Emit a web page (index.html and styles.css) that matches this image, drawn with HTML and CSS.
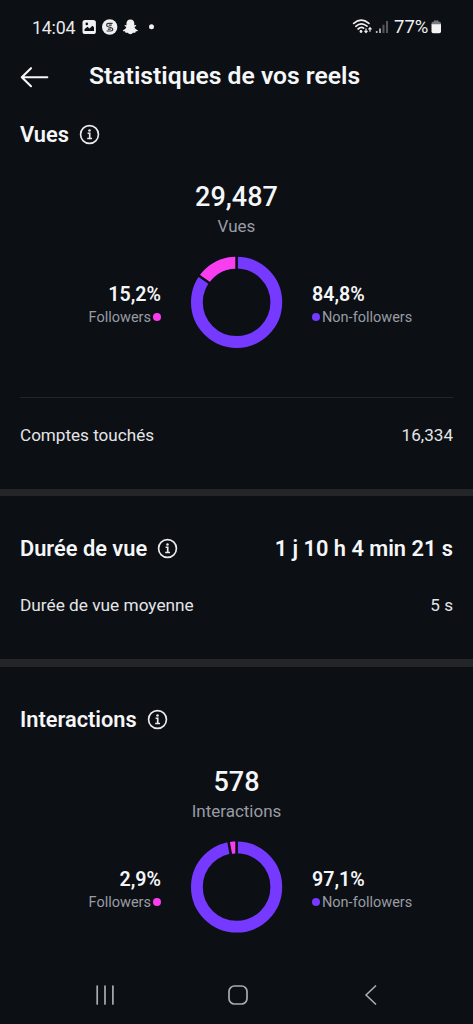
FILE: index.html
```html
<!DOCTYPE html>
<html lang="fr">
<head>
<meta charset="utf-8">
<title>Statistiques de vos reels</title>
<link rel="stylesheet" href="styles.css">
</head>
<body>
<div class="screen">
  <div class="status">
    <span class="clock">14:04</span>
    <svg class="notifs" width="76" height="18" viewBox="0 0 76 18">
      <rect x="0.5" y="2" width="13.4" height="14" rx="2.6" fill="#f0f0f2"/>
      <path d="M2.5 13V11.2L5.4 8.8L7.5 10.4L10.4 7.8L12 9.2V13Z" fill="#0c0f14"/>
      <circle cx="4.8" cy="5.9" r="1.3" fill="#0c0f14"/>
      <circle cx="27.7" cy="9" r="7.7" fill="#f0f0f2"/>
      <path d="M30.6 5.3H26.5Q24.6 5.3 24.6 7Q24.6 8.2 26.2 8.7L29 9.6Q30.8 10.1 30.8 11.3Q30.8 13 28.8 13H24.6M29.8 7.2H26.8M25.8 11.1H28.8" fill="none" stroke="#33353a" stroke-width="1.2"/>
      <path d="M48.4 1.5C45.6 1.5 44.5 3.4 44.5 5.3V7.2L42.8 7.1L42.6 7.9L44.3 8.9C43.8 10.6 42.6 11.7 40.8 12.3C41 13.2 42 13.4 43.1 13.5L43.5 14.7H45.6C46.6 15.4 47.2 16.2 48.4 16.2S50.2 15.4 51.2 14.7H53.3L53.7 13.5C54.8 13.4 55.8 13.2 56 12.3C54.2 11.7 53 10.6 52.5 8.9L54.2 7.9L54 7.1L52.3 7.2V5.3C52.3 3.4 51.2 1.5 48.4 1.5Z" fill="#f0f0f2"/>
      <circle cx="69.5" cy="8.8" r="2.5" fill="#f0f0f2"/>
    </svg>
    <svg class="signal" width="38" height="18" viewBox="0 0 38 18">
      <g fill="none" stroke="#eeeef0" stroke-width="1.7" stroke-linecap="round">
        <path d="M1.7 5.4Q9.3-1.1 16.9 5.4"/>
        <path d="M3.8 8.3Q9.3 3.5 15 8.2"/>
        <path d="M6.1 11Q9.3 8.2 11.6 10.2"/>
      </g>
      <circle cx="9" cy="13.5" r="1.4" fill="#eeeef0"/>
      <path d="M14 10.6V14.3M12.5 12.9L14 14.6L15.5 12.9M18 13.8V10M16.5 11.3L18 9.6L19.5 11.3" fill="none" stroke="#eeeef0" stroke-width="1.2"/>
      <path d="M24.7 15V12.9M28 15V10.4" stroke="#b9babd" stroke-width="1.7"/>
      <path d="M31.5 15V6.8M35 15V3" stroke="#55575c" stroke-width="2"/>
    </svg>
    <span class="battery-text">77%</span>
    <svg class="battery" width="11" height="14" viewBox="0 0 11 14">
      <path d="M3 0.5H7.5V1.8H8.5Q10 1.8 10 3.4V5H0.5V3.4Q0.5 1.8 2 1.8H3Z" fill="#77797d"/>
      <path d="M0.5 4.2H10V11.5Q10 13.2 8.3 13.2H2.2Q0.5 13.2 0.5 11.5Z" fill="#f3f3f4"/>
    </svg>
  </div>

  <header class="topbar">
    <svg width="30" height="22" viewBox="0 0 30 22" fill="none" stroke="#f5f6f8" stroke-width="2.1" stroke-linecap="round" stroke-linejoin="round"><path d="M27.3 11.2H2M11 2.2L1.8 11.2L11 20.2"/></svg>
    <h1 class="title">Statistiques de vos reels</h1>
  </header>

  <section class="section views">
    <div class="heading">
      <h2 class="h-views">Vues</h2>
      <svg class="info" viewBox="0 0 20 20"><circle cx="10" cy="10" r="8.5"/><path d="M8.2 8.8H10.2V13.7M7.8 13.8H12.4"/><circle class="info-dot" cx="10" cy="6.2" r="1.2"/></svg>
    </div>
    <div class="total total-views">29,487</div>
    <div class="total-label label-views">Vues</div>
    <div class="breakdown">
      <div class="side left">
        <div class="percent">15,2%</div>
        <div class="legend"><span class="legend-text">Followers</span><i class="dot pink"></i></div>
      </div>
      <svg class="donut" viewBox="0 0 92 92">
        <circle class="ring" cx="45.6" cy="46.3" r="39.7"/>
        <path class="slice" d="M45.6 6.6A39.7 39.7 0 0 0 13.2 23.36"/>
        <path class="gap" d="M45.6 13.8V0M19.04 27.5L6.6 18.7"/>
      </svg>
      <div class="side right">
        <div class="percent">84,8%</div>
        <div class="legend"><i class="dot violet"></i><span class="legend-text">Non-followers</span></div>
      </div>
    </div>
    <div class="row reached"><span class="r-reached">Comptes touchés</span><span class="v-reached">16,334</span></div>
  </section>

  <section class="section duration">
    <div class="heading">
      <h2 class="h-duration">Durée de vue</h2>
      <svg class="info" viewBox="0 0 20 20"><circle cx="10" cy="10" r="8.5"/><path d="M8.2 8.8H10.2V13.7M7.8 13.8H12.4"/><circle class="info-dot" cx="10" cy="6.2" r="1.2"/></svg>
      <strong class="duration-value">1 j 10 h 4 min 21 s</strong>
    </div>
    <div class="row average"><span class="r-average">Durée de vue moyenne</span><span>5 s</span></div>
  </section>

  <section class="section interactions">
    <div class="heading">
      <h2 class="h-interactions">Interactions</h2>
      <svg class="info" viewBox="0 0 20 20"><circle cx="10" cy="10" r="8.5"/><path d="M8.2 8.8H10.2V13.7M7.8 13.8H12.4"/><circle class="info-dot" cx="10" cy="6.2" r="1.2"/></svg>
    </div>
    <div class="total">578</div>
    <div class="total-label">Interactions</div>
    <div class="breakdown">
      <div class="side left">
        <div class="percent">2,9%</div>
        <div class="legend"><span class="legend-text">Followers</span><i class="dot pink"></i></div>
      </div>
      <svg class="donut" viewBox="0 0 92 92">
        <circle class="ring" cx="45.6" cy="46" r="39.7"/>
        <path class="slice" d="M45.6 6.3A39.7 39.7 0 0 0 38.4 6.96"/>
        <path class="gap" d="M45.6 13.5V0M40 14.3L37.4 0"/>
      </svg>
      <div class="side right">
        <div class="percent">97,1%</div>
        <div class="legend"><i class="dot violet"></i><span class="legend-text">Non-followers</span></div>
      </div>
    </div>
  </section>

  <nav class="navbar">
    <svg width="20" height="20" viewBox="0 0 20 20"><path d="M2.2 1V19M10 1V19M17.9 1V19"/></svg>
    <svg width="20" height="20" viewBox="0 0 20 20"><rect x="1" y="1" width="18" height="18" rx="5.5"/></svg>
    <svg width="20" height="20" viewBox="0 0 20 20"><path d="M14.5 1L5 10L14.5 19"/></svg>
  </nav>
</div>
</body>
</html>
```
FILE: styles.css
```css
* { box-sizing: border-box; }
body {
  margin: 0;
  background: #0c0f14;
  color: #f5f6f8;
  font-family: Roboto, "Liberation Sans", sans-serif;
}
h1, h2 { margin: 0; font-weight: 600; }
svg { display: block; flex: none; }
span, h1, h2, strong { white-space: nowrap; }
.screen {
  width: 473px;
  height: 1024px;
  overflow: hidden;
  display: flex;
  flex-direction: column;
}
.status {
  height: 54px;
  flex: none;
  display: flex;
  align-items: center;
  padding: 0 31px 0 32px;
}
.clock { width: 50px; font-size: 17.8px; letter-spacing: -0.2px; color: #e8e9eb; }
.signal { margin-left: auto; }
.battery-text { width: 41px; padding-left: 4px; font-size: 18.5px; color: #f0f0f2; }
.topbar {
  height: 46px;
  flex: none;
  display: flex;
  align-items: center;
  padding-left: 20px;
  gap: 39px;
}
.title { font-size: 24.7px; line-height: 28px; margin-top: -2px; }
.section { flex: none; padding: 0 20px; }
.views { height: 396px; padding-top: 10px; border-bottom: 7px solid #242529; }
.duration { height: 171px; padding-top: 28px; border-bottom: 8px solid #242529; }
.interactions { height: 300px; padding-top: 28px; }
.heading { height: 50px; display: flex; align-items: center; gap: 10px; }
.heading h2 { font-size: 21.8px; line-height: 24px; }
.info {
  width: 21px;
  height: 21px;
  margin-top: -2px;
  fill: none;
  stroke: #e9eaec;
  stroke-width: 1.6;
}
.info .info-dot { fill: #e9eaec; stroke: none; }
.duration-value { margin-left: auto; font-size: 21.8px; line-height: 24px; font-weight: 600; }
.total {
  margin-top: 22px;
  height: 30px;
  text-align: center;
  font-size: 27px;
  line-height: 30px;
  font-weight: 500;
}
.total-label {
  height: 24px;
  margin-top: 2px;
  text-align: center;
  font-size: 17px;
  line-height: 24px;
  color: #999ca4;
}
.breakdown {
  display: grid;
  grid-template-columns: 141px 92px 1fr;
  column-gap: 30px;
  align-items: center;
  margin-top: 18px;
}
.donut { width: 92px; height: 92px; fill: none; }
.ring { stroke: #7639ff; stroke-width: 11.8; }
.slice { stroke: #fb3df0; stroke-width: 11.8; }
.gap { stroke: #0c0f14; stroke-width: 2.6; }
.side { display: flex; flex-direction: column; padding-top: 8px; }
.left { align-items: flex-end; }
.right { margin-left: -1px; }
.percent { font-size: 19.6px; line-height: 24px; font-weight: 600; }
.legend {
  display: flex;
  align-items: center;
  gap: 2px;
  font-size: 14.5px;
  line-height: 22px;
  color: #999ca4;
}
.dot { width: 8px; height: 8px; border-radius: 50%; margin-top: -2px; }
.pink { background: #fb3df0; }
.violet { background: #7639ff; }
.row {
  display: flex;
  justify-content: space-between;
  font-size: 17.1px;
  line-height: 24px;
  color: #e4e5e8;
}
.r-average { font-size: 17.25px; }
.reached { margin-top: 49px; padding-top: 25px; border-top: 1px solid #22252a; }
.average { margin-top: 19px; }
.navbar {
  margin-top: 18px;
  display: flex;
  gap: 113px;
  padding-left: 95px;
}
.navbar svg { fill: none; stroke: #a9acb1; stroke-width: 1.7; stroke-linecap: round; stroke-linejoin: round; }
```
